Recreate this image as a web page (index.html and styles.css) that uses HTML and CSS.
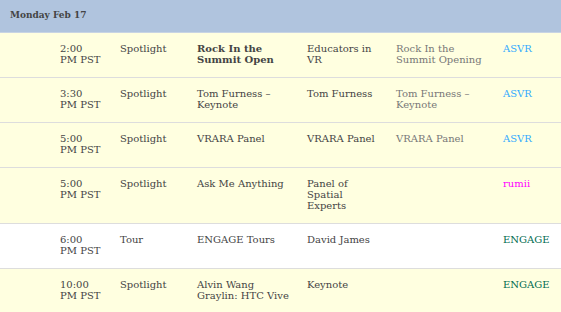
FILE: index.html
```html
<!DOCTYPE html>
<html>
<head>
<meta charset="utf-8">
<link rel="stylesheet" href="styles.css">
</head>
<body>
<div class="schedule">
  <div class="day">Monday Feb 17</div>
  <div class="row">
    <div class="time">2:00<br>PM PST</div>
    <div class="type">Spotlight</div>
    <div class="title bold">Rock In the Summit Open</div>
    <div class="host">Educators in VR</div>
    <div class="desc">Rock In the Summit Opening</div>
    <div class="org asvr">ASVR</div>
  </div>
  <div class="row">
    <div class="time">3:30<br>PM PST</div>
    <div class="type">Spotlight</div>
    <div class="title">Tom Furness – Keynote</div>
    <div class="host">Tom Furness</div>
    <div class="desc">Tom Furness – Keynote</div>
    <div class="org asvr">ASVR</div>
  </div>
  <div class="row">
    <div class="time">5:00<br>PM PST</div>
    <div class="type">Spotlight</div>
    <div class="title">VRARA Panel</div>
    <div class="host">VRARA Panel</div>
    <div class="desc">VRARA Panel</div>
    <div class="org asvr">ASVR</div>
  </div>
  <div class="row">
    <div class="time">5:00<br>PM PST</div>
    <div class="type">Spotlight</div>
    <div class="title">Ask Me Anything</div>
    <div class="host">Panel of Spatial Experts</div>
    <div class="desc"></div>
    <div class="org rumii">rumii</div>
  </div>
  <div class="row white">
    <div class="time">6:00<br>PM PST</div>
    <div class="type">Tour</div>
    <div class="title">ENGAGE Tours</div>
    <div class="host">David James</div>
    <div class="desc"></div>
    <div class="org engage">ENGAGE</div>
  </div>
  <div class="row">
    <div class="time">10:00<br>PM PST</div>
    <div class="type">Spotlight</div>
    <div class="title">Alvin Wang Graylin: HTC Vive</div>
    <div class="host">Keynote</div>
    <div class="desc"></div>
    <div class="org engage">ENGAGE</div>
  </div>
</div>
</body>
</html>
```
FILE: styles.css
```css
html, body {
  margin: 0;
  padding: 0;
  background: #ffffe0;
}
body {
  font-family: "DejaVu Serif", "Liberation Serif", serif;
  font-size: 10px;
  color: #444;
}
.day {
  background: #b0c4de;
  height: 33px;
  box-sizing: border-box;
  padding: 9px 10px 0;
  font-size: 10px;
  font-weight: bold;
  font-stretch: condensed;
  color: #444;
  border-bottom: 1px solid #c8d4e4;
}
.row {
  display: grid;
  grid-template-columns: 60px 77px 110px 89px 107px 1fr;
  padding: 10px 0 12px 60px;
  line-height: 11px;
  border-bottom: 1px solid #ddd;
  background: #ffffe0;
}
.row.white {
  background: #fff;
}
.row > div {
  padding-right: 20px;
}
.row > .time,
.row > .type {
  padding-right: 4px;
  white-space: nowrap;
}
.row > .title {
  padding-right: 14px;
}
.bold {
  font-weight: bold;
}
.desc {
  color: #777;
}
.asvr {
  color: #33aaff;
}
.rumii {
  color: #ff00ff;
}
.engage {
  color: #006b4f;
}
```
